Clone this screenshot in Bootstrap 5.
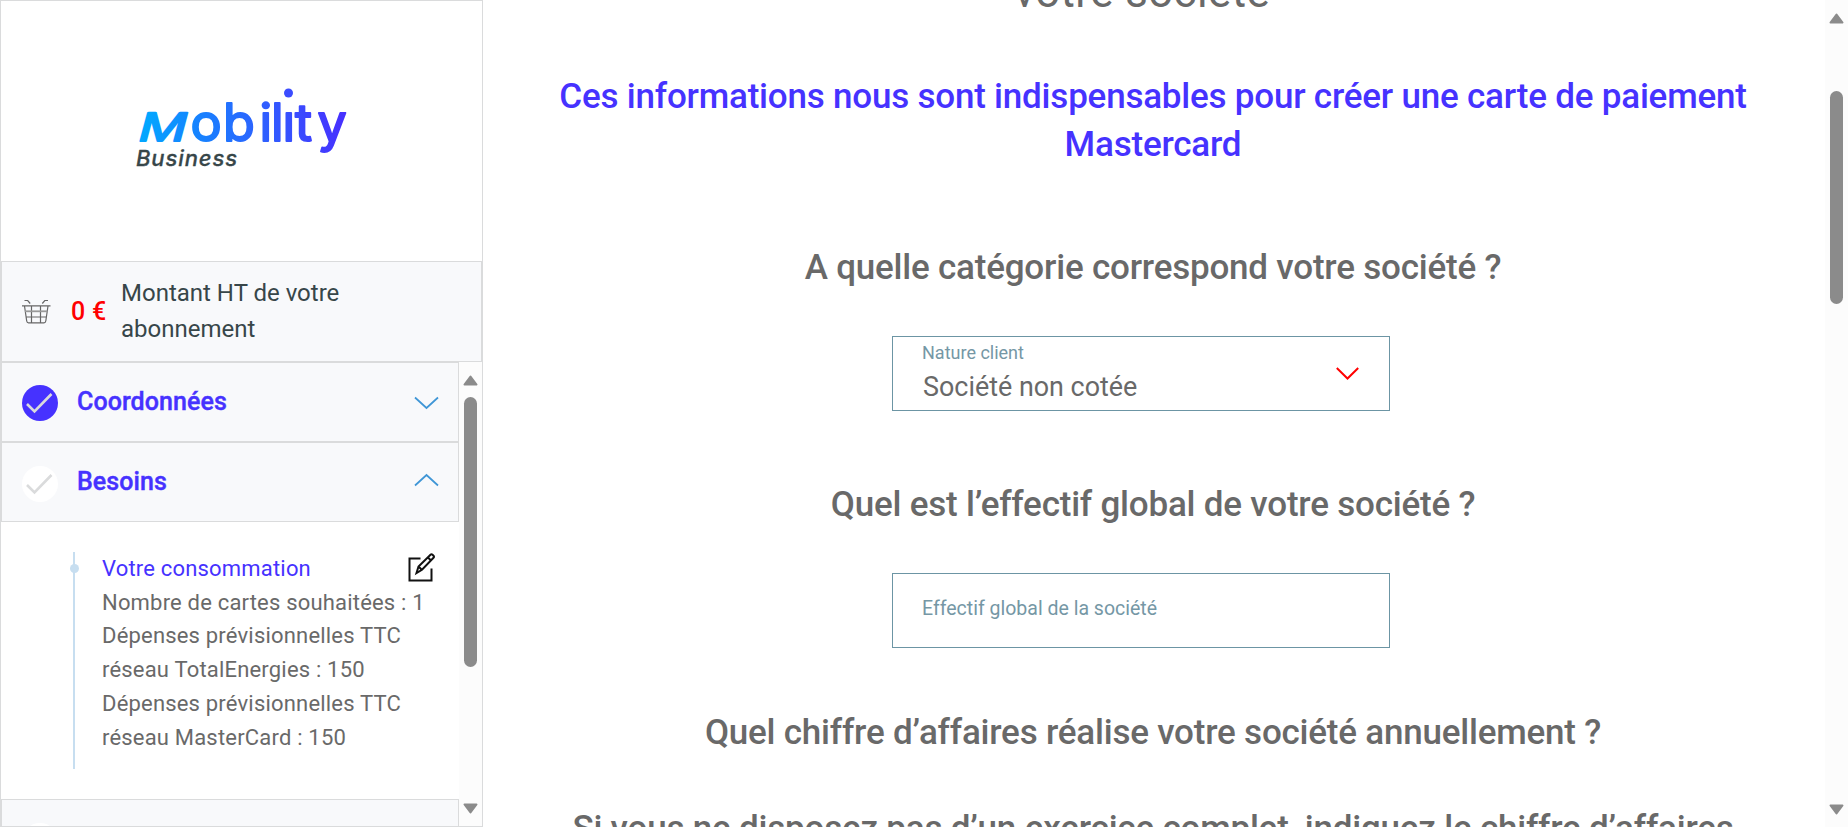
<!DOCTYPE html>
<html lang="fr">
<head>
<meta charset="utf-8">
<meta name="viewport" content="width=device-width, initial-scale=1">
<title>Mobility Business</title>
<link href="https://cdn.jsdelivr.net/npm/bootstrap@5.3.0/dist/css/bootstrap.min.css" rel="stylesheet">
<style>
  body { font-family: Roboto, "Liberation Sans", sans-serif; color: #696969; }
  .side { width: 483px; border: 1px solid #dadbdc; }
  .logo-zone { height: 260px; }
  .panel-box { background: #f8f9fb; border: 1px solid #dadbdc; }
  .cart { height: 101px; padding-left: 20px; }
  .amount { color: #f00; font-size: 25px; font-weight: 500; width: 50px; margin-left: 19px; letter-spacing: .3px; }
  .amount-label { color: #374649; font-size: 24px; line-height: 36px; letter-spacing: 0; width: 260px; padding-bottom: 2px; }
  .step { height: 80px; padding: 0 19px 0 20px; }
  .tick { margin-top: 4px; }
  .tick-first { margin-top: 2px; }
  .step-name { color: #4632ff; font-size: 25px; font-weight: 500; -webkit-text-stroke: .4px #4632ff; letter-spacing: .08px; margin-left: 19px; }
  .chev-down { margin-top: 2px; }
  .chev-up { margin-bottom: 4px; }
  .detail { height: 277px; padding: 30px 0 0 72px; }
  .rail { border-left: 2px solid #c7def0; height: 217px; padding-left: 27px; }
  .rail-dot { position: absolute; left: -5px; top: 12px; width: 9px; height: 9px; border-radius: 50%; background: #c7def0; }
  .recap { font-size: 22px; line-height: 33.7px; letter-spacing: .19px; white-space: nowrap; }
  .recap-title { color: #4632ff; }
  .pen { margin-right: 23px; }
  .track { width: 23px; background: #fcfcfc; padding: 13px 4px 12px; }
  .thumb { background: #8b8b8b; border-radius: 7px; width: 13px; }
  .side-thumb { height: 270px; margin-top: 11px; }
  .page-thumb { height: 213px; margin-top: 67px; }
  .content-title { font-size: 43.75px; line-height: 52px; margin: -34px 22px 0 0; letter-spacing: .45px; }
  .q { font-size: 35px; line-height: 48px; font-weight: 500; letter-spacing: -.21px; position: relative; top: 1px; }
  .q-lead { color: #4632ff; }
  .question-area { padding-right: 2px; }
  .field { width: 498px; height: 75px; border: 1px solid #6c95a4; margin-right: 24px; padding: 0 30px 0 29px; }
  .field-label { color: #7597a5; font-size: 18px; line-height: 22px; }
  .field-value { font-size: 26.9px; line-height: 32px; margin: 7px 0 0 1px; }
  .field-stack { padding-top: 5px; }
  .effectif { font-size: 19.500px; padding-bottom: 3px; }
</style>
</head>
<body class="vh-100 overflow-hidden bg-white">
<div class="d-flex vh-100">
  <aside class="side d-flex flex-column flex-shrink-0 overflow-hidden">
    <div class="logo-zone flex-shrink-0">
      <svg width="481" height="260" viewBox="1 1 481 260" role="img">
        <defs>
          <linearGradient id="brand" gradientUnits="userSpaceOnUse" x1="190" y1="140" x2="340" y2="125">
            <stop offset="0" stop-color="#1388ff"/><stop offset=".5" stop-color="#2f5fff"/><stop offset="1" stop-color="#4632ff"/>
          </linearGradient>
          <linearGradient id="brand-m"><stop offset="0" stop-color="#00aaff"/><stop offset="1" stop-color="#1388ff"/></linearGradient>
        </defs>
        <g font-family="Inter" font-weight="400" stroke-linejoin="round">
          <text transform="translate(136 140.500) skewX(-15) scale(1.360 1)" font-size="39" fill="url(#brand-m)" stroke="url(#brand-m)" stroke-width="2">M</text>
          <text y="140.500" x="190.500 223 259.500 271 282.500 295 317.500" font-size="52" fill="url(#brand)" stroke="url(#brand)" stroke-width="2">obilıty</text>
          <circle cx="288.500" cy="93" r="4.500" fill="#3b4cff"/>
          <text x="136" y="166" font-size="22" font-style="italic" font-weight="500" fill="#374649" stroke="#374649" stroke-width=".3" textLength="101">Business</text>
        </g>
      </svg>
    </div>
    <div class="panel-box cart d-flex align-items-center flex-shrink-0">
      <svg width="30" height="26" viewBox="0 0 30 26" fill="none" stroke="#666" stroke-width="1.200">
        <path d="M0 6.800h28.500M2.500 1.500h3.200l2.500 3M26 1.500h-3.200l-2.500 3M2.500 7l2.200 15q.3 1.800 1.800 1.800h15.500q1.500 0 1.800-1.800L26 7M4 18h20.500M9.500 7v16.500M18.500 7v16.500"/>
        <path d="M3 12.300h22.500" stroke="#999" stroke-width="1.800"/>
      </svg>
      <span class="amount text-nowrap">0 €</span>
      <span class="amount-label">Montant HT de votre abonnement</span>
    </div>
    <div class="d-flex flex-grow-1 overflow-hidden">
      <div class="flex-grow-1">
        <div class="panel-box step d-flex align-items-center">
          <svg class="tick-first" width="36" height="36" viewBox="0 0 36 36"><circle cx="18" cy="18" r="18" fill="#4632ff"/><path d="M5 19l7.500 7.500L29.500 9" fill="none" stroke="#dadbdc" stroke-width="2.600"/></svg>
          <span class="step-name">Coordonnées</span>
          <svg class="chev-down ms-auto" width="25" height="14" viewBox="0 0 25 14"><path d="M1 1.500l11.500 10.500L24 1.500" fill="none" stroke="#3f96d6" stroke-width="1.700"/></svg>
        </div>
        <div class="panel-box step d-flex align-items-center">
          <svg class="tick" width="36" height="36" viewBox="0 0 36 36"><circle cx="18" cy="18" r="18" fill="#fff"/><path d="M5 19l7.500 7.500L29.500 9" fill="none" stroke="#dadbdc" stroke-width="2.600"/></svg>
          <span class="step-name">Besoins</span>
          <svg class="chev-up ms-auto" width="25" height="14" viewBox="0 0 25 14"><path d="M1 12.500L12.500 2 24 12.500" fill="none" stroke="#3f96d6" stroke-width="1.700"/></svg>
        </div>
        <div class="detail">
          <div class="rail position-relative">
            <span class="rail-dot"></span>
            <div class="recap">
              <div class="d-flex">
                <span class="recap-title">Votre consommation</span>
                <svg class="pen ms-auto" width="30" height="30" viewBox="0 0 30 30" fill="none" stroke="#111" stroke-width="2"><path d="M14.500 6.500H3.500v22h22V16.500"/><path d="M10.500 21l2-6.500L24.500 2.800q1-1 2 0l1 1q1 1 0 2L16 17.800zM22 5.500l3 3M12.500 14.500l3 3" stroke-width="2"/></svg>
              </div>
              <div>Nombre de cartes souhaitées : 1</div>
              <div>Dépenses prévisionnelles TTC<br>réseau TotalEnergies : 150</div>
              <div>Dépenses prévisionnelles TTC<br>réseau MasterCard : 150</div>
            </div>
          </div>
        </div>
        <div class="panel-box step d-flex align-items-center">
          <svg class="tick" width="36" height="36" viewBox="0 0 36 36"><circle cx="18" cy="18" r="18" fill="#fff"/></svg>
        </div>
      </div>
      <div class="track d-flex flex-column align-items-center flex-shrink-0">
        <svg class="flex-shrink-0" width="15" height="11" viewBox="0 0 15 11"><path d="M7.500 1.500L13.500 9.500h-12z" fill="#8b8b8b" stroke="#8b8b8b" stroke-width="2" stroke-linejoin="round"/></svg>
        <div class="thumb side-thumb flex-shrink-0"></div>
        <svg class="mt-auto flex-shrink-0" width="15" height="11" viewBox="0 0 15 11"><path d="M7.500 9.500L13.500 1.500h-12z" fill="#8b8b8b" stroke="#8b8b8b" stroke-width="2" stroke-linejoin="round"/></svg>
      </div>
    </div>
  </aside>
  <main class="question-area flex-grow-1 overflow-hidden d-flex flex-column align-items-center text-center">
    <h1 class="content-title flex-shrink-0 fw-normal">votre société</h1>
    <div class="q q-lead flex-shrink-0" style="margin-top:54px">Ces informations nous sont indispensables pour créer une carte de paiement<br>Mastercard</div>
    <div class="q flex-shrink-0" style="margin-top:75px">A quelle catégorie correspond votre société ?</div>
    <div class="field flex-shrink-0 d-flex justify-content-between align-items-center text-start" style="margin-top:45px">
      <div class="field-stack align-self-start">
        <div class="field-label">Nature client</div>
        <div class="field-value">Société non cotée</div>
      </div>
      <svg width="23" height="13" viewBox="0 0 23 13"><path d="M.8 1l10.700 10.500L22.200 1" fill="none" stroke="#f00" stroke-width="2"/></svg>
    </div>
    <div class="q flex-shrink-0" style="margin-top:69px">Quel est l’effectif global de votre société ?</div>
    <div class="field flex-shrink-0 d-flex align-items-center" style="margin-top:45px">
      <div class="field-label effectif">Effectif global de la société</div>
    </div>
    <div class="q flex-shrink-0" style="margin-top:60px">Quel chiffre d’affaires réalise votre société annuellement ?</div>
    <div class="q flex-shrink-0" style="margin-top:48px">Si vous ne disposez pas d’un exercice complet, indiquez le chiffre d’affaires</div>
  </main>
  <div class="track d-flex flex-column align-items-center flex-shrink-0">
    <svg class="flex-shrink-0" width="15" height="11" viewBox="0 0 15 11"><path d="M7.500 1.500L13.500 9.500h-12z" fill="#8b8b8b" stroke="#8b8b8b" stroke-width="2" stroke-linejoin="round"/></svg>
    <div class="thumb page-thumb flex-shrink-0"></div>
    <svg class="mt-auto flex-shrink-0" width="15" height="11" viewBox="0 0 15 11"><path d="M7.500 9.500L13.500 1.500h-12z" fill="#8b8b8b" stroke="#8b8b8b" stroke-width="2" stroke-linejoin="round"/></svg>
  </div>
</div>
<script src="https://cdn.jsdelivr.net/npm/bootstrap@5.3.0/dist/js/bootstrap.bundle.min.js"></script>
</body>
</html>
